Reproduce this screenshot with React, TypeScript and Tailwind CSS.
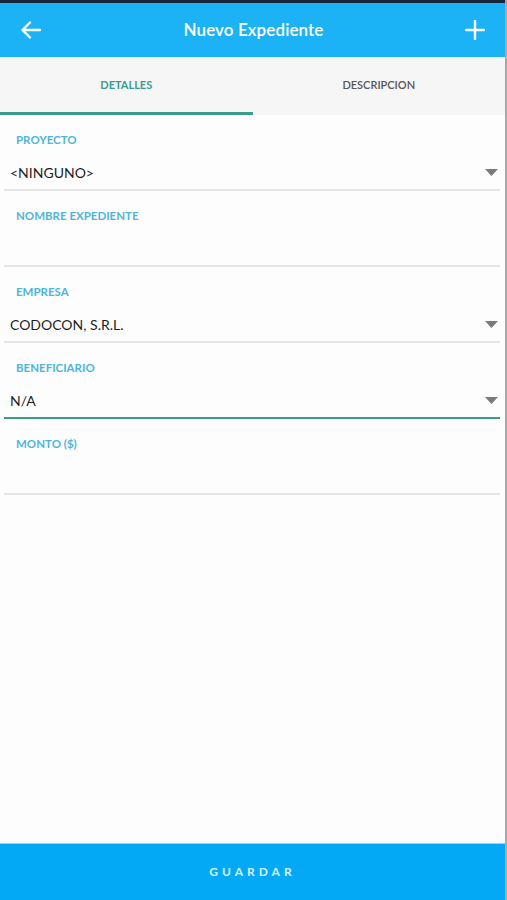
import React from 'react';

const fields = [
  { label: 'PROYECTO', value: '<NINGUNO>', select: true },
  { label: 'NOMBRE EXPEDIENTE', value: '', select: false },
  { label: 'EMPRESA', value: 'CODOCON, S.R.L.', select: true },
  { label: 'BENEFICIARIO', value: 'N/A', select: true, focused: true },
  { label: 'MONTO ($)', value: '', select: false },
];

const Caret = () => (
  <svg width="13" height="7" viewBox="0 0 13 7" className="shrink-0">
    <path d="M0 0 L13 0 L6.5 7 Z" fill="#7a7a7a" />
  </svg>
);

const App: React.FC = () => {
  return (
    <div
      className="w-[507px] h-[900px] flex flex-col bg-[#fdfdfd] border-r-2 border-[#a9a9a9] overflow-hidden"
      style={{ fontFamily: 'Lato, "Open Sans", sans-serif' }}
    >
      <div className="h-[3px] bg-[#17273a]" />
      <div className="h-[54px] bg-[#1bb3f6] flex items-center justify-between px-[20px] text-white">
        <svg width="22" height="20" viewBox="0 0 22 20" fill="none" stroke="white" strokeWidth="2.4" strokeLinecap="round" strokeLinejoin="round">
          <path d="M20 10 H3 M10 2.5 L2.5 10 L10 17.5" />
        </svg>
        <h1 className="text-[17px] font-semibold tracking-[0.1px] text-white">Nuevo Expediente</h1>
        <svg width="20" height="20" viewBox="0 0 20 20" fill="none" stroke="white" strokeWidth="2.4" strokeLinecap="round">
          <path d="M10 1 V19 M1 10 H19" />
        </svg>
      </div>

      <div className="h-[58px] bg-[#f6f6f6] flex">
        <div className="flex-1 flex flex-col">
          <div className="flex-1 flex items-center justify-center pt-[1px] text-[11px] font-bold text-[#3a9c8e]">DETALLES</div>
          <div className="h-[3px] bg-[#3a9c8e]" />
        </div>
        <div className="flex-1 flex flex-col">
          <div className="flex-1 flex items-center justify-center pt-[1px] text-[11px] font-semibold text-[#555555]">DESCRIPCION</div>
          <div className="h-[3px]" />
        </div>
      </div>

      <div className="flex-1 flex flex-col pl-[4px] pr-[5px]">
        {fields.map((f) => (
          <div
            key={f.label}
            className={`pt-[18px] pb-[7px] border-b-2 ${f.focused ? 'border-[#3a9c8e]' : 'border-[#e4e4e4]'}`}
          >
            <div className="pl-[12px] h-[14px] leading-[14px] text-[11.5px] font-bold text-[#4fb5d8]">{f.label}</div>
            <div className="mt-[15px] h-[20px] flex items-center justify-between pl-[6px] pr-[2px]">
              <span className="text-[14px] text-[#1e1e1e]">{f.value}</span>
              {f.select && <Caret />}
            </div>
          </div>
        ))}
      </div>

      <button className="h-[57px] bg-[#03a9f4] flex items-center justify-center text-[12px] font-bold tracking-[4px] text-[#d6f1fc] border-t border-[#8fd6f5]">
        GUARDAR
      </button>
    </div>
  );
};

export default App;
